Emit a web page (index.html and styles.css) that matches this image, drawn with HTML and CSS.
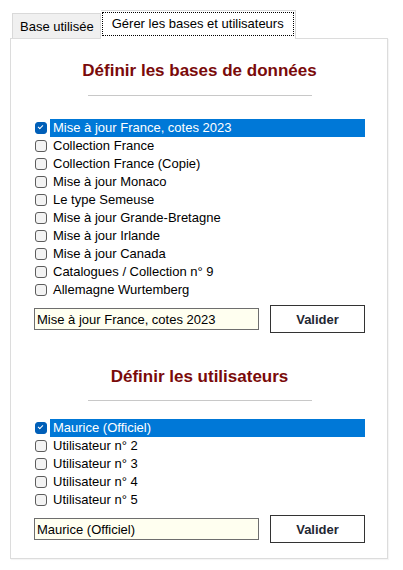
FILE: index.html
```html
<!DOCTYPE html>
<html lang="fr">
<head>
    <meta charset="UTF-8">
    <meta name="viewport" content="width=device-width, initial-scale=1.0">
    <title>Gérer les bases et utilisateurs</title>
    <link rel="stylesheet" href="styles.css">
</head>
<body>

    <div class="tabs">
        <div class="tab">Base utilisée</div>
        <div class="tab active"><span class="focus">Gérer les bases et utilisateurs</span></div>
    </div>

    <div class="panel">
        <h2 class="title">Définir les bases de données</h2>
        <hr class="sep">

        <ul class="checklist">
            <li class="selected"><span class="box checked"></span><span class="label">Mise à jour France, cotes 2023</span></li>
            <li><span class="box"></span><span class="label">Collection France</span></li>
            <li><span class="box"></span><span class="label">Collection France (Copie)</span></li>
            <li><span class="box"></span><span class="label">Mise à jour Monaco</span></li>
            <li><span class="box"></span><span class="label">Le type Semeuse</span></li>
            <li><span class="box"></span><span class="label">Mise à jour Grande-Bretagne</span></li>
            <li><span class="box"></span><span class="label">Mise à jour Irlande</span></li>
            <li><span class="box"></span><span class="label">Mise à jour Canada</span></li>
            <li><span class="box"></span><span class="label">Catalogues / Collection n° 9</span></li>
            <li><span class="box"></span><span class="label">Allemagne Wurtemberg</span></li>
        </ul>

        <div class="form-row">
            <input class="name-input" value="Mise à jour France, cotes 2023">
            <button class="btn">Valider</button>
        </div>

        <h2 class="title second">Définir les utilisateurs</h2>
        <hr class="sep second">

        <ul class="checklist">
            <li class="selected"><span class="box checked"></span><span class="label">Maurice (Officiel)</span></li>
            <li><span class="box"></span><span class="label">Utilisateur n° 2</span></li>
            <li><span class="box"></span><span class="label">Utilisateur n° 3</span></li>
            <li><span class="box"></span><span class="label">Utilisateur n° 4</span></li>
            <li><span class="box"></span><span class="label">Utilisateur n° 5</span></li>
        </ul>

        <div class="form-row">
            <input class="name-input" value="Maurice (Officiel)">
            <button class="btn">Valider</button>
        </div>
    </div>

</body>
</html>
```

FILE: styles.css
```css
body {
    margin: 0;
    padding: 10px;
    font-family: "Liberation Sans", "DejaVu Sans", sans-serif;
    font-size: 13px;
    color: #000;
    background-color: #fff;
}
.tabs {
    display: flex;
    align-items: flex-end;
    margin-left: 2px;
    position: relative;
    z-index: 1;
}
.tab {
    height: 24px;
    padding: 0 6px 0 7px;
    display: flex;
    align-items: center;
    border: 1px solid #d9d9d9;
    border-bottom: none;
    background-color: #f0f0f0;
}
.tab.active {
    height: 28px;
    padding: 0 1px;
    margin-bottom: -1px;
    background-color: #fff;
    border-left: none;
}
.focus {
    display: flex;
    align-items: center;
    height: 22px;
    padding: 0 9px;
    border: 1px dotted #000;
    margin-bottom: 3px;
}
.panel {
    width: 378px;
    height: 521px;
    box-sizing: border-box;
    border: 1px solid #dcdcdc;
    padding: 21px 22px 0 23px;
    box-shadow: 1px 1px 1px rgba(0,0,0,0.04);
}
.title {
    margin: 0;
    text-align: center;
    font-size: 17px;
    line-height: 22px;
    font-weight: bold;
    color: #7a0a0a;
}
.title.second {
    margin-top: 33px;
}
.sep {
    width: 224px;
    margin: 13px auto 23px;
    border: none;
    border-top: 1px solid #c8c8c8;
}
.sep.second {
    margin: 12px auto 18px;
}
.checklist {
    list-style: none;
    margin: 0;
    padding: 0;
}
.checklist li {
    display: flex;
    align-items: center;
    height: 18px;
}
.box {
    width: 10px;
    height: 10px;
    margin-left: 1px;
    border: 1px solid #5c5c5c;
    border-radius: 3px;
    background-color: #f3f3f3;
    flex-shrink: 0;
}
.box.checked {
    background-color: #005fb8;
    border-color: #005fb8;
    position: relative;
}
.box.checked::after {
    content: "";
    position: absolute;
    left: 2px;
    top: 2px;
    width: 4px;
    height: 2px;
    border-left: 1px solid #fff;
    border-bottom: 1px solid #fff;
    transform: rotate(-45deg);
}
.label {
    flex: 1;
    margin-left: 3px;
    padding-left: 3px;
    line-height: 18px;
}
.selected .label {
    background-color: #0078d7;
    color: #fff;
}
.form-row {
    display: flex;
    align-items: center;
    gap: 11px;
    margin-top: 6px;
}
.name-input {
    width: 225px;
    height: 22px;
    box-sizing: border-box;
    padding: 0 2px;
    border: 1px solid #6e6e6e;
    background-color: #fffff0;
    font-family: inherit;
    font-size: 13px;
    color: #000;
}
.btn {
    width: 95px;
    height: 28px;
    border: 1px solid #333;
    background-color: #fff;
    font-family: inherit;
    font-size: 13px;
    font-weight: bold;
    color: #1f2733;
}
```
